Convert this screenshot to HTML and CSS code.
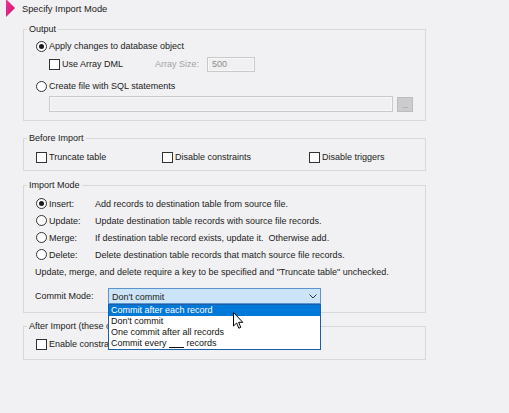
FILE: index.html
```html
<!DOCTYPE html>
<html>
<head>
<meta charset="utf-8">
<link rel="stylesheet" href="styles.css">
</head>
<body>
<div class="page">
  <div class="header">
    <svg class="arrow" width="16" height="18" viewBox="0 0 16 18"><defs><linearGradient id="pg" x1="0" y1="0" x2="1" y2="1"><stop offset="0" stop-color="#f0389a"/><stop offset="1" stop-color="#c8106a"/></linearGradient></defs><polygon points="6,-1 15,8 6,17" fill="url(#pg)"/></svg>
    <span class="title">Specify Import Mode</span>
  </div>

  <fieldset class="group g-output">
    <legend>Output</legend>
    <div class="row r-a"><span class="radio checked"></span><span class="lbl">Apply changes to database object</span></div>
    <div class="row r-b indent">
      <span class="item w-dml"><span class="check"></span><span class="lbl">Use Array DML</span></span>
      <span class="dis w-size">Array Size:</span>
      <span class="input small">500</span>
    </div>
    <div class="row r-c"><span class="radio"></span><span class="lbl">Create file with SQL statements</span></div>
    <div class="row r-d indent"><span class="input wide"></span><span class="btn">...</span></div>
  </fieldset>

  <fieldset class="group g-before">
    <legend>Before Import</legend>
    <div class="row">
      <span class="item w-trunc"><span class="check"></span><span class="lbl">Truncate table</span></span>
      <span class="item w-cons"><span class="check"></span><span class="lbl">Disable constraints</span></span>
      <span class="item"><span class="check"></span><span class="lbl">Disable triggers</span></span>
    </div>
  </fieldset>

  <fieldset class="group g-mode">
    <legend>Import Mode</legend>
    <div class="row mrow"><span class="item w-mode"><span class="radio checked"></span><span class="lbl">Insert:</span></span><span>Add records to destination table from source file.</span></div>
    <div class="row mrow"><span class="item w-mode"><span class="radio"></span><span class="lbl">Update:</span></span><span>Update destination table records with source file records.</span></div>
    <div class="row mrow"><span class="item w-mode"><span class="radio"></span><span class="lbl">Merge:</span></span><span>If destination table record exists, update it.&nbsp; Otherwise add.</span></div>
    <div class="row mrow"><span class="item w-mode"><span class="radio"></span><span class="lbl">Delete:</span></span><span>Delete destination table records that match source file records.</span></div>
    <div class="row note">Update, merge, and delete require a key to be specified and "Truncate table" unchecked.</div>
    <div class="row commit">
      <span class="w-commit">Commit Mode:</span>
      <div class="select">
        <span class="sel-text">Don't commit</span>
        <svg class="chev" width="8" height="5" viewBox="0 0 8 5"><polyline points="0.5,0.5 4,4 7.5,0.5" fill="none" stroke="#333" stroke-width="1"/></svg>
        <div class="dropdown">
          <div class="opt active">Commit after each record</div>
          <div class="opt">Don't commit</div>
          <div class="opt">One commit after all records</div>
          <div class="opt">Commit every <u>&nbsp;&nbsp;&nbsp;&nbsp;&nbsp;&nbsp;</u> records</div>
        </div>
        <svg class="cursor" width="12" height="18" viewBox="0 0 12 18"><path d="M0.5,0.5 L0.5,14 L3.6,11 L5.8,16.2 L7.8,15.4 L5.6,10.3 L9.8,10.3 Z" fill="#fff" stroke="#000" stroke-width="1" stroke-linejoin="round"/></svg>
      </div>
    </div>
  </fieldset>

  <fieldset class="group g-after">
    <legend>After Import (these options)</legend>
    <div class="row">
      <span class="item"><span class="check"></span><span class="lbl">Enable constraints</span></span>
    </div>
  </fieldset>
</div>
</body>
</html>
```

FILE: styles.css
```css
html, body {
  margin: 0;
  padding: 0;
  background: #f1f0f2;
}
body {
  font-family: "Liberation Sans", Arial, sans-serif;
  font-size: 9px;
  color: #1b1b1b;
  width: 509px;
  height: 413px;
  overflow: hidden;
}
.page {
  padding-left: 23px;
}
.header {
  height: 23px;
  margin-left: -23px;
  display: flex;
  align-items: flex-start;
}
.arrow {
  display: block;
}
.title {
  margin-left: 6px;
  line-height: 12px;
  margin-top: 3px;
  font-size: 9.3px;
}
.group {
  margin: 0;
  width: 403px;
  box-sizing: border-box;
  min-width: 0;
  border: 1px solid #d8d7da;
  padding: 0 12px;
}
.group legend {
  font-size: 9px;
  line-height: 12px;
  padding: 0 2px;
  margin-left: -9px;
  color: #1b1b1b;
}
.row {
  display: flex;
  align-items: center;
  height: 16px;
  white-space: nowrap;
}
.item {
  display: flex;
  align-items: center;
}
.indent {
  padding-left: 13px;
}
.radio {
  width: 11px;
  height: 11px;
  box-sizing: border-box;
  border: 1px solid #333;
  border-radius: 50%;
  background: #fff;
  position: relative;
  flex: none;
}
.radio.checked::after {
  content: "";
  position: absolute;
  left: 2px;
  top: 2px;
  width: 5px;
  height: 5px;
  border-radius: 50%;
  background: #1b1b1b;
}
.check {
  width: 11px;
  height: 11px;
  box-sizing: border-box;
  border: 1px solid #333;
  background: #fff;
  flex: none;
}
.lbl {
  margin-left: 2px;
}

/* Output */
.g-output { padding-top: 3px; padding-bottom: 8px; }
.r-b { margin-top: 2px; }
.r-c { margin-top: 6px; }
.r-d { margin-top: 2px; }
.w-dml { width: 106px; }
.dis { color: #a3a3a3; }
.w-size { width: 52px; }
.input {
  box-sizing: border-box;
  height: 16px;
  border: 1px solid #c9c9c9;
  box-shadow: inset 0 0 0 1px #f7f7f7;
  background: #f0eff1;
  display: flex;
  align-items: center;
  padding-left: 4px;
  color: #8d8d8d;
}
.input.small { width: 48px; height: 15px; }
.input.wide { width: 344px; }
.btn {
  margin-left: 4px;
  width: 16px;
  height: 15px;
  box-sizing: border-box;
  background: #cccbcd;
  border: 1px solid #bdbdbd;
  color: #8a8a8a;
  font-size: 8px;
  line-height: 15px;
  text-align: center;
}

/* Before */
.g-before { margin-top: 11px; padding-top: 5px; padding-bottom: 5px; }
.w-trunc { width: 126px; }
.w-cons { width: 147px; }

/* Import mode */
.g-mode { margin-top: 8px; padding-top: 4px; padding-bottom: 8px; }
.mrow { height: 17px; }
.w-mode { width: 59px; }
.note { height: 17px; margin-left: -1px; }
.commit { margin-top: 8px; margin-left: -1px; }
.w-commit { width: 73px; }
.select {
  position: relative;
  width: 213px;
  height: 16px;
  box-sizing: border-box;
  border: 1px solid #5b93cf;
  background: #cce4f7;
  display: flex;
  align-items: center;
  padding-left: 3px;
}
.sel-text { flex: 1; padding-top: 1px; }
.chev { margin-right: 3px; }
.dropdown {
  position: absolute;
  left: -1px;
  top: 15px;
  width: 213px;
  box-sizing: border-box;
  border: 1px solid #1a5fa8;
  background: #fff;
  z-index: 5;
}
.opt {
  height: 11px;
  line-height: 11px;
  padding-left: 2px;
  color: #111;
}
.opt.active {
  background: #0078d7;
  color: #fff;
}
.cursor {
  position: absolute;
  left: 124px;
  top: 23px;
  z-index: 6;
}

/* After */
.g-after { margin-top: 7px; padding-top: 4px; padding-bottom: 7px; }
```
